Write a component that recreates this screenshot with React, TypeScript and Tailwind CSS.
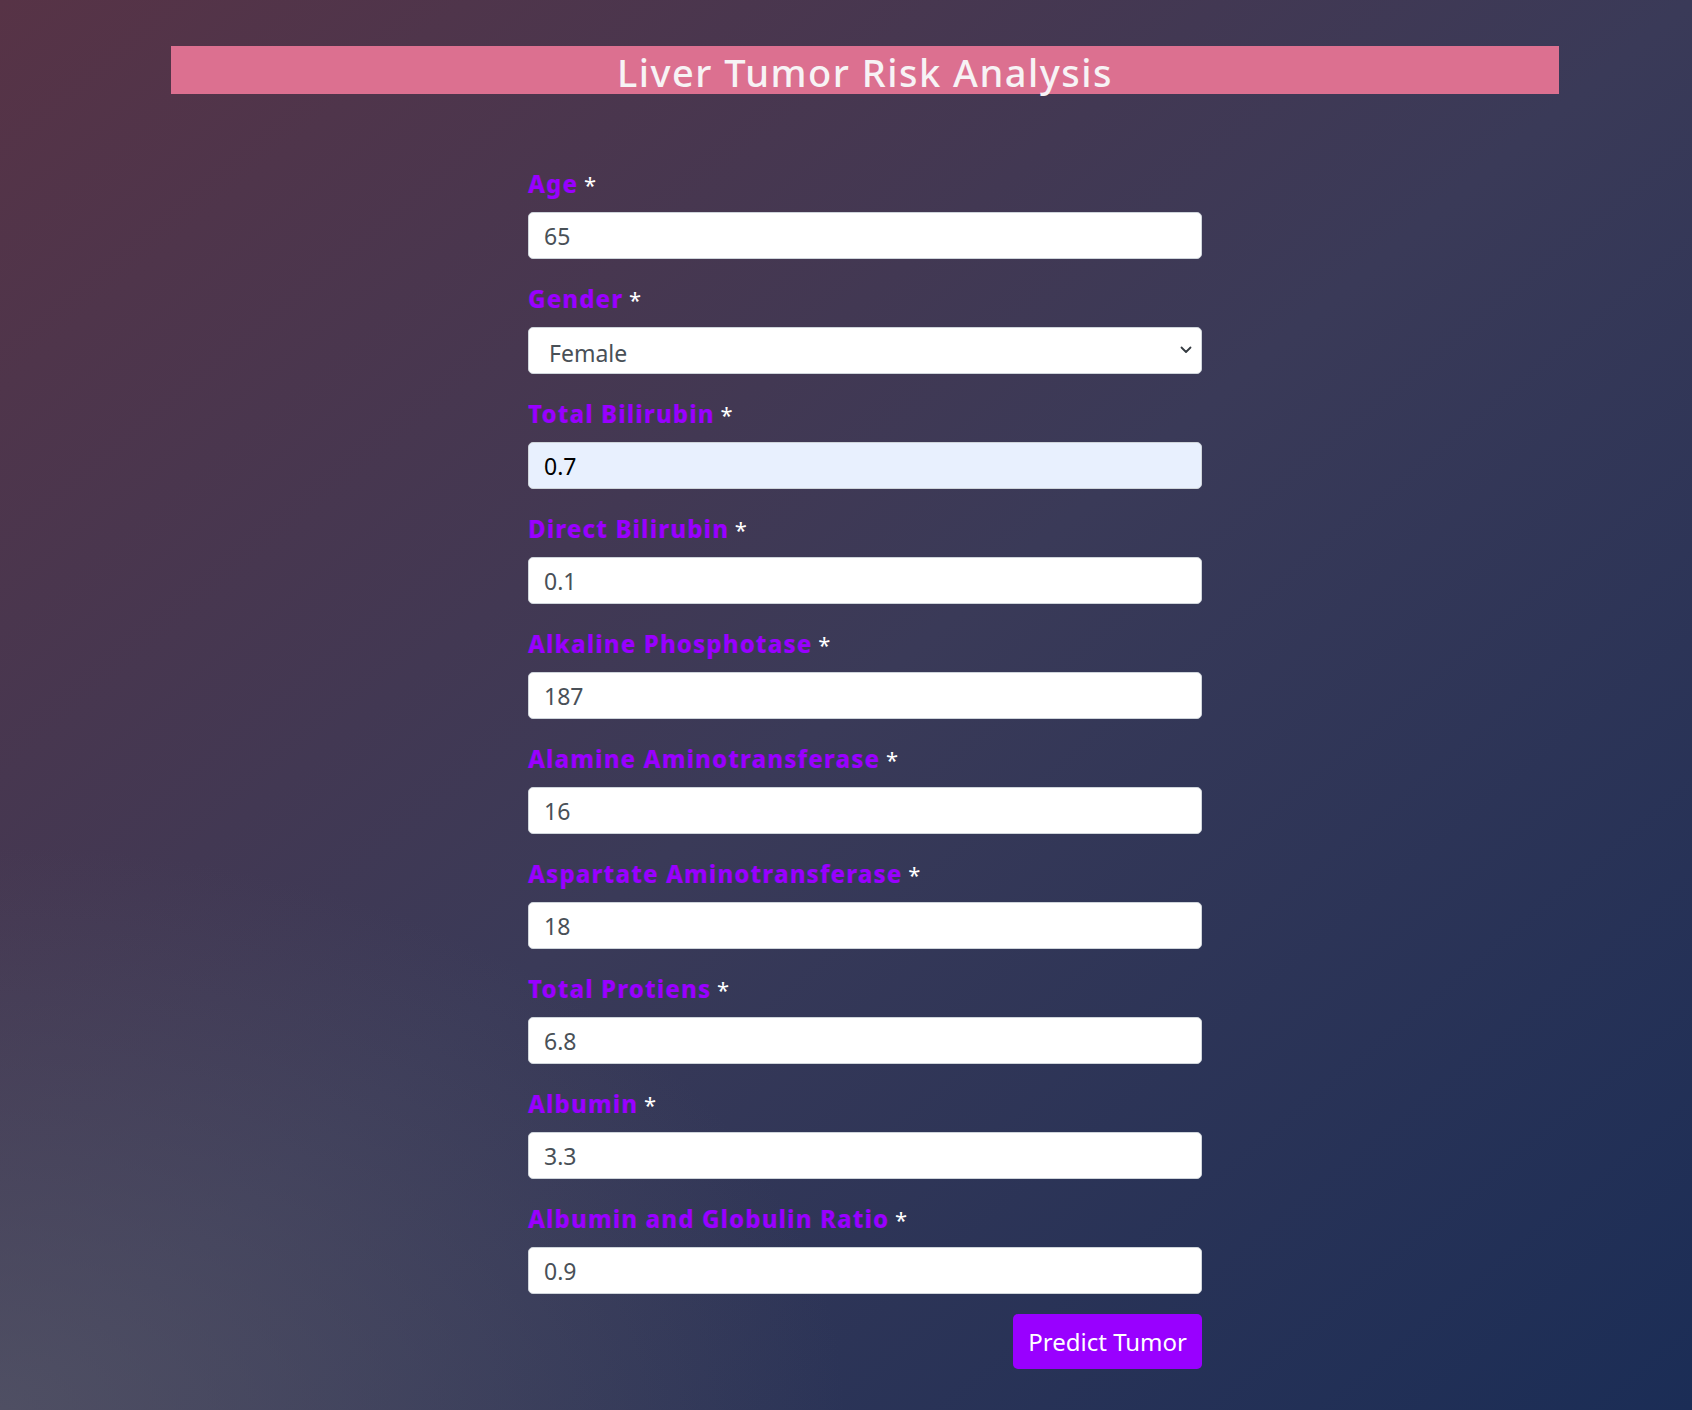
import React from "react";

const fields: { label: string; value: string; autofill?: boolean; select?: boolean }[] = [
  { label: "Age", value: "65" },
  { label: "Gender", value: "Female", select: true },
  { label: "Total Bilirubin", value: "0.7", autofill: true },
  { label: "Direct Bilirubin", value: "0.1" },
  { label: "Alkaline Phosphotase", value: "187" },
  { label: "Alamine Aminotransferase", value: "16" },
  { label: "Aspartate Aminotransferase", value: "18" },
  { label: "Total Protiens", value: "6.8" },
  { label: "Albumin", value: "3.3" },
  { label: "Albumin and Globulin Ratio", value: "0.9" },
];

export default function App() {
  return (
    <div className="min-h-screen w-full bg-[radial-gradient(ellipse_50%_40%_at_0%_100%,rgba(88,88,104,0.7),rgba(88,88,104,0)),linear-gradient(to_bottom_right,#573346,#3a3a58_50%,#1b2d56)] font-['Noto_Sans',sans-serif]">
      <div className="pt-[46px] pl-[171px] w-[1559px]">
        <div className="h-[48px] bg-[#dc7090] flex items-center justify-center">
          <h1 className="text-[38px] leading-none font-medium text-[#f7f3f5] tracking-[1.5px] pt-[4px]">
            Liver Tumor Risk Analysis
          </h1>
        </div>
        <form className="w-[674px] mx-auto mt-[76px] flex flex-col">
          <div className="flex flex-col gap-[26px]">
            {fields.map((f) => (
              <div key={f.label} className="flex flex-col">
                <label className="h-[30px] leading-[28px] mb-3 text-[24px] font-extrabold text-[#9900ff] tracking-[1.1px] whitespace-nowrap">
                  {f.label}
                  <span className="text-white font-normal tracking-normal text-[22px]"> *</span>
                </label>
                {f.select ? (
                  <div className="relative h-[47px]">
                    <select
                      defaultValue="Female"
                      className="appearance-none w-full h-[47px] bg-white rounded-[5px] border border-[#ced4da] pl-[20px] pt-[6px] text-[23px] text-[#495057] font-['Noto_Sans',sans-serif] outline-none"
                    >
                      <option>Female</option>
                      <option>Male</option>
                    </select>
                    <svg
                      className="absolute right-[10px] top-[19px] pointer-events-none"
                      width="12"
                      height="8"
                      viewBox="0 0 12 8"
                    >
                      <path d="M1.5 1.5 L6 6 L10.5 1.5" fill="none" stroke="#343a40" strokeWidth="1.8" strokeLinecap="round" strokeLinejoin="round" />
                    </svg>
                  </div>
                ) : (
                  <input
                    defaultValue={f.value}
                    className={
                      f.autofill
                        ? "w-full h-[47px] bg-[#e8f0fe] rounded-[5px] border border-[#ced4da] px-[15px] text-[23px] text-black outline-none font-['Noto_Sans',sans-serif]"
                        : "w-full h-[47px] bg-white rounded-[5px] border border-[#ced4da] px-[15px] text-[23px] text-[#495057] outline-none font-['Noto_Sans',sans-serif]"
                    }
                  />
                )}
              </div>
            ))}
          </div>
          <div className="flex justify-end mt-[20px]">
            <button
              type="button"
              className="h-[55px] px-[15px] bg-[#9900ff] text-white text-[24px] rounded-[5px] font-['Noto_Sans',sans-serif]"
            >
              Predict Tumor
            </button>
          </div>
        </form>
      </div>
    </div>
  );
}
